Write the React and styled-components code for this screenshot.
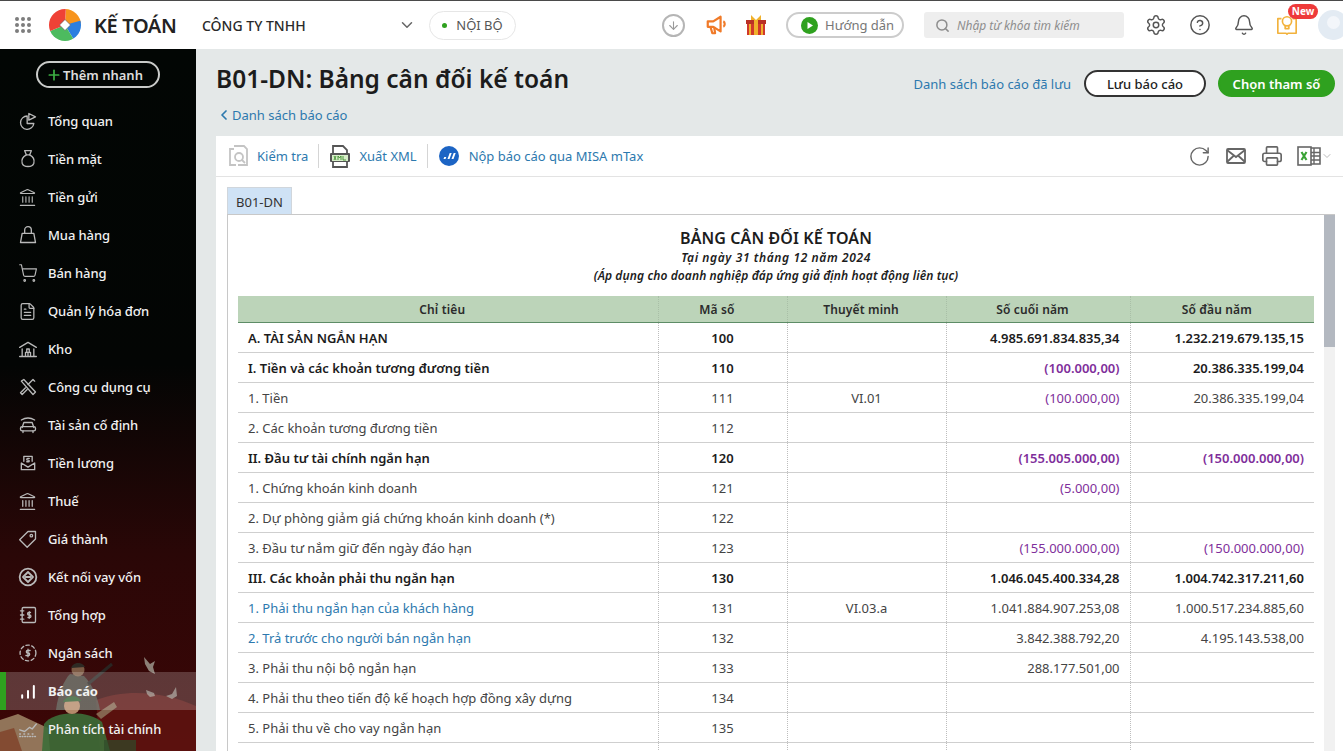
import React from "react";
import styled, { createGlobalStyle } from "styled-components";
import {
  Search,
  Settings,
  CircleHelp,
  Bell,
  ChevronDown,
  ChevronLeft,
  ArrowDown,
  RotateCw,
  Printer,
  Plus,
  Landmark,
  ShoppingCart,
  FileText,
} from "lucide-react";

const GlobalStyle = createGlobalStyle`
  html, body {
    margin: 0;
    height: 100%;
    overflow: hidden;
    background: #e4e8e8;
    font-family: "Noto Sans", "Open Sans", sans-serif;
  }
  * { box-sizing: border-box; }
`;

const Page = styled.div`
  height: 751px;
  display: flex;
  flex-direction: column;
  overflow: hidden;
`;

/* top bar */
const TopBar = styled.header`
  height: 49px;
  flex: none;
  background: #fff;
  border-top: 1px solid #4a4a4a;
  display: flex;
  align-items: center;
  padding-left: 15px;
  position: relative;
`;

const AppGrid = styled.div`
  display: grid;
  grid-template-columns: repeat(3, 4px);
  gap: 2px;
  margin-right: 18px;
  i {
    width: 4px;
    height: 4px;
    border-radius: 50%;
    background: #7d7d7d;
  }
`;

const Brand = styled.div`
  font-size: 20px;
  font-weight: 600;
  letter-spacing: -0.35px;
  color: #222;
  margin-left: 13px;
  width: 108px;
`;

const Company = styled.div`
  font-size: 14px;
  font-weight: 500;
  color: #2a2a2a;
  width: 196px;
`;

const ScopePill = styled.div`
  height: 29px;
  width: 87px;
  margin-left: 13px;
  border: 1px solid #e6e6e6;
  border-radius: 15px;
  display: flex;
  align-items: center;
  justify-content: center;
  gap: 9px;
  font-size: 13px;
  color: #555;
  i {
    width: 5px;
    height: 5px;
    border-radius: 50%;
    background: #2fa11f;
  }
`;

const TopRight = styled.div`
  margin-left: auto;
  display: flex;
  align-items: center;
`;

const RoundDown = styled.div`
  width: 23px;
  height: 23px;
  margin-right: 1px;
  border-radius: 50%;
  border: 2px solid #b5b5b5;
  color: #9a9a9a;
  display: flex;
  align-items: center;
  justify-content: center;
`;

const TopIcon = styled.div`
  display: flex;
  margin-left: ${(p) => p.$gap || 0}px;
  color: #555;
`;

const GuidePill = styled.div`
  height: 26px;
  width: 118px;
  margin-left: 20px;
  border: 2px solid #ccc;
  border-radius: 13px;
  display: flex;
  align-items: center;
  padding-left: 13px;
  gap: 7px;
  font-size: 13px;
  color: #777;
`;

const SearchBox = styled.div`
  width: 200px;
  height: 26px;
  margin-left: 20px;
  background: #eeeeee;
  border-radius: 3px;
  display: flex;
  align-items: center;
  padding-left: 11px;
  gap: 7px;
  color: #8d8d8d;
  font-size: 12px;
  font-style: italic;
`;

const NewBadge = styled.span`
  position: absolute;
  left: 1288px;
  top: 3px;
  width: 30px;
  height: 15px;
  border-radius: 8px;
  background: #ee3a3a;
  color: #fff;
  font-size: 10px;
  font-weight: 700;
  line-height: 15px;
  text-align: center;
`;

const Avatar = styled.div`
  width: 30px;
  height: 30px;
  margin-left: 20px;
  margin-right: -5px;
  border-radius: 50%;
  background: #e3ebf3;
  position: relative;
  overflow: hidden;
  &::after {
    content: "";
    position: absolute;
    left: 9px;
    top: 6px;
    width: 13px;
    height: 13px;
    border-radius: 50%;
    background: #f3f6fa;
  }
`;

/* body */
const Body = styled.div`
  flex: 1;
  min-height: 0;
  display: flex;
`;

const Sidebar = styled.aside`
  width: 196px;
  flex: none;
  position: relative;
  overflow: hidden;
  background: linear-gradient(180deg, #020604 0%, #030504 45%, #2a0707 72%, #3d0606 100%);
  padding-top: 12px;
`;

const Artwork = styled.svg`
  position: absolute;
  left: 0;
  bottom: 0;
  width: 196px;
  height: 111px;
`;

const QuickAdd = styled.button`
  position: relative;
  display: flex;
  align-items: center;
  gap: 1px;
  width: 124px;
  height: 27px;
  margin: 0 0 14px 36px;
  padding: 0 0 0 8px;
  background: transparent;
  border: 2px solid #c9cbc9;
  border-radius: 14px;
  color: #dcdcdc;
  font: 600 13px "Noto Sans", sans-serif;
  svg { color: #3cb043; }
`;

const MenuItem = styled.div`
  position: relative;
  height: 38px;
  display: flex;
  align-items: center;
  padding-left: ${(p) => (p.$active ? 12 : 18)}px;
  color: #f1f1f1;
  font-size: 13px;
  letter-spacing: -0.1px;
  font-weight: ${(p) => (p.$active ? 700 : 500)};
  background: ${(p) => (p.$active ? "rgba(255,255,255,0.2)" : "transparent")};
  border-left: ${(p) => (p.$active ? "6px solid #2fa11f" : "0")};
`;

const MenuIcon = styled.span`
  width: 30px;
  display: flex;
  color: ${(p) => (p.$active ? "#fff" : "#b9b9b9")};
`;

/* main */
const Main = styled.main`
  flex: 1;
  min-width: 0;
  padding-left: 20px;
  display: flex;
  flex-direction: column;
`;

const HeadRow = styled.div`
  height: 87px;
  flex: none;
  display: flex;
  justify-content: space-between;
  padding-right: 8px;
`;

const TitleBlock = styled.div`
  padding-top: 11px;
  h1 {
    margin: 0;
    font-size: 24.5px;
    line-height: 38px;
    font-weight: 600;
    color: #1c1c1c;
  }
`;

const BackLink = styled.div`
  display: flex;
  align-items: center;
  margin-top: 8px;
  font-size: 13px;
  color: #2d79ae;
`;

const Actions = styled.div`
  display: flex;
  align-items: center;
  gap: 12px;
  height: 27px;
  margin-top: 21px;
`;

const SavedLink = styled.span`
  font-size: 13px;
  color: #2d79ae;
  margin-right: 1px;
`;

const PillButton = styled.button`
  height: 27px;
  width: ${(p) => p.$w}px;
  padding: 0;
  border-radius: 14px;
  border: 2px solid ${(p) => (p.$primary ? "#2fa11f" : "#333")};
  background: ${(p) => (p.$primary ? "#2fa11f" : "#fff")};
  color: ${(p) => (p.$primary ? "#fff" : "#222")};
  font: ${(p) => (p.$primary ? 600 : 500)} 13px "Noto Sans", sans-serif;
`;

const Panel = styled.section`
  flex: 1;
  min-height: 0;
  background: #fff;
  display: flex;
  flex-direction: column;
`;

const Toolbar = styled.div`
  height: 41px;
  flex: none;
  border-bottom: 1px solid #e3e3e3;
  display: flex;
  align-items: center;
  padding: 0 13px 0 12px;
  font-size: 13px;
  color: #2d79ae;
`;

const ToolItem = styled.div`
  display: flex;
  align-items: center;
  gap: ${(p) => p.$gap || 8}px;
`;

const ToolSep = styled.span`
  width: 1px;
  height: 24px;
  background: #d5d5d5;
  margin: 0 ${(p) => p.$right || 10}px 0 10px;
`;

const ToolRight = styled.div`
  margin-left: auto;
  display: flex;
  align-items: center;
  gap: 14px;
  color: #666;
`;

const ExcelWrap = styled.div`
  display: flex;
  align-items: center;
  margin-right: -3px;
  color: #bbb;
`;

const TabStrip = styled.div`
  padding: 10px 0 0 11px;
  flex: none;
`;

const Tab = styled.div`
  width: 65px;
  height: 27px;
  background: #cfe2f5;
  border: 1px solid #d0d6dc;
  border-bottom: 0;
  font-size: 13px;
  line-height: 28px;
  text-align: center;
  color: #333;
`;

const Sheet = styled.div`
  flex: 1;
  min-height: 0;
  margin-left: 11px;
  margin-right: 8px;
  border-top: 1px solid #c8c8c8;
  border-left: 1px solid #c8c8c8;
  display: flex;
  overflow: hidden;
`;

const SheetBody = styled.div`
  flex: 1;
  min-width: 0;
  padding: 0 10px;
`;

const Scrollbar = styled.div`
  width: 11px;
  flex: none;
  background: #f1f1f1;
  i {
    display: block;
    height: 132px;
    background: #b3b8c0;
  }
`;

const ReportTitle = styled.div`
  text-align: center;
  padding-top: 12px;
  height: 81px;
  color: #1c1c1c;
  h2 {
    margin: 0;
    font-size: 16px;
    line-height: 22px;
    font-weight: 600;
    letter-spacing: 0.1px;
  }
`;

const ReportLine = styled.p`
  margin: 0;
  font-size: 12px;
  line-height: 18px;
  font-weight: 600;
  font-style: italic;
  letter-spacing: ${(p) => p.$track}px;
`;

const Table = styled.table`
  width: 1076px;
  border-collapse: collapse;
  table-layout: fixed;
  font-size: 13px;
  color: #333;
`;

const Th = styled.th`
  height: 26px;
  background: #bcd4b9;
  border-bottom: 1px solid #5d8c66;
  border-left: 1px dotted #a9bfa7;
  font-size: 12px;
  font-weight: 600;
  letter-spacing: 0.15px;
  color: #2b2b2b;
  padding: 2px 11px 0 0;
  &:first-child { border-left: 0; }
`;

const Td = styled.td`
  height: 30px;
  padding: 1px 10px 0;
  border-bottom: 1px solid #cfcfcf;
  border-left: 1px dotted #bdbdbd;
  white-space: nowrap;
  text-align: ${(p) => p.$align || "left"};
  font-weight: ${(p) => (p.$bold ? 600 : 400)};
  color: ${(p) => (p.$neg ? "#7f2f9b" : p.$link ? "#2d79ae" : p.$bold ? "#1c1c1c" : "#444")};
  &:first-child { border-left: 0; }
`;

const Ic = ({ children, size = 20, sw = 1.6 }) => (
  <svg width={size} height={size} viewBox="0 0 24 24" fill="none" stroke="currentColor" strokeWidth={sw} strokeLinecap="round" strokeLinejoin="round">
    {children}
  </svg>
);

const menu = [
  ["Tổng quan", <Ic><path d="M11 6a8 8 0 1 0 8 9h-8z" /><path d="M13 3v8l8-4z" /></Ic>],
  ["Tiền mặt", <Ic><path d="M8 2h8l-2 5h-4z" /><path d="M10 7c-4 2-6 6-5 10 1 3 4 4 7 4s6-1 7-4c1-4-1-8-5-10" /></Ic>],
  ["Tiền gửi", <Landmark size={19} strokeWidth={1.4} />],
  ["Mua hàng", <Ic><path d="M5 10h14l2 11H3z" /><path d="M8 10V6a4 4 0 0 1 8 0v4" /></Ic>],
  ["Bán hàng", <ShoppingCart size={20} strokeWidth={1.4} />],
  ["Quản lý hóa đơn", <FileText size={19} strokeWidth={1.6} />],
  ["Kho", <Ic><path d="M2 10 12 4l10 6" /><path d="M5 12v8M19 12v8M2 21h20" /><path d="M9 20v-4h3v4M12 20v-4h3v4M10.500 16v-4h3v4" /></Ic>],
  ["Công cụ dụng cụ", <Ic><path d="m4 5 3-2 14 15-3 3z" /><path d="M20 5l-2-2-6 6M9 13l-6 6 2 2 6-6" /></Ic>],
  ["Tài sản cố định", <Ic><path d="M4 6c5-3 11-3 16 0" /><path d="M5 15l2-6h10l2 6" /><rect x="3" y="14" width="18" height="5" rx="2" /><path d="M6 19v2M18 19v2" /></Ic>],
  ["Tiền lương", <Ic><path d="M7 10V4h10v6" /><path d="M4 12v8h16v-8l-8 5z" /><path d="M13.500 6.500h-2a1 1 0 0 0 0 2h1a1 1 0 0 1 0 2h-2" /></Ic>],
  ["Thuế", <Landmark size={19} strokeWidth={1.6} />],
  ["Giá thành", <Ic><path d="M21 3v9L11 22l-9-9L12 3z" /><circle cx="16" cy="8" r="1.500" /></Ic>],
  ["Kết nối vay vốn", <Ic sw={2.2} size={20}><circle cx="12" cy="12" r="10" /><path d="m12 6-6 6 6 6 6-6z" /><path d="M9 12h6" /></Ic>],
  ["Tổng hợp", <Ic><rect x="5" y="3" width="16" height="18" rx="1.500" /><path d="M3 7h4M3 12h4M3 17h4" /><path d="M15 9h-2a1.300 1.300 0 0 0 0 3h1a1.300 1.300 0 0 1 0 3h-2M13.500 8v8" /></Ic>],
  ["Ngân sách", <Ic><circle cx="12" cy="12" r="9.500" strokeDasharray="4 3" /><path d="M14.500 9h-3a1.500 1.500 0 0 0 0 3h1a1.500 1.500 0 0 1 0 3h-3M12 7.500v9" /></Ic>],
  ["Báo cáo", <Ic sw={2.4}><path d="M5 20v-3M12 20v-8M19 20V6" /></Ic>, true],
  ["Phân tích tài chính", <Ic><path d="M2 13l6 2 6-5 3 2 5-6" /><path d="M2 21h20M2 18h1M7 18h1M12 18h1M17 18h1" strokeDasharray="1 2" /></Ic>],
];

const rows = [
  ["A. TÀI SẢN NGẮN HẠN", "100", "", "4.985.691.834.835,34", "1.232.219.679.135,15", "b"],
  ["I. Tiền và các khoản tương đương tiền", "110", "", "(100.000,00)", "20.386.335.199,04", "b"],
  ["1. Tiền", "111", "VI.01", "(100.000,00)", "20.386.335.199,04"],
  ["2. Các khoản tương đương tiền", "112", "", "", ""],
  ["II. Đầu tư tài chính ngắn hạn", "120", "", "(155.005.000,00)", "(150.000.000,00)", "b"],
  ["1. Chứng khoán kinh doanh", "121", "", "(5.000,00)", ""],
  ["2. Dự phòng giảm giá chứng khoán kinh doanh (*)", "122", "", "", ""],
  ["3. Đầu tư nắm giữ đến ngày đáo hạn", "123", "", "(155.000.000,00)", "(150.000.000,00)"],
  ["III. Các khoản phải thu ngắn hạn", "130", "", "1.046.045.400.334,28", "1.004.742.317.211,60", "b"],
  ["1. Phải thu ngắn hạn của khách hàng", "131", "VI.03.a", "1.041.884.907.253,08", "1.000.517.234.885,60", "l"],
  ["2. Trả trước cho người bán ngắn hạn", "132", "", "3.842.388.792,20", "4.195.143.538,00", "l"],
  ["3. Phải thu nội bộ ngắn hạn", "133", "", "288.177.501,00", ""],
  ["4. Phải thu theo tiến độ kế hoạch hợp đồng xây dựng", "134", "", "", ""],
  ["5. Phải thu về cho vay ngắn hạn", "135", "", "", ""],
  ["", "", "", "", ""],
];

const Logo = () => (
  <svg width="32" height="32" viewBox="0 0 32 32">
    <defs>
      <clipPath id="logoCircle"><circle cx="16" cy="16" r="16" /></clipPath>
    </defs>
    <g clipPath="url(#logoCircle)">
      <path d="M16 16 17-2h20v16z" fill="#f7941d" />
      <path d="M16 16 37 10v26h-9z" fill="#2b7fe0" />
      <path d="M16 16 28 36H-4V24z" fill="#4dbb5f" />
      <path d="M16 16-4 24V-4h21z" fill="#ef4136" />
    </g>
    <path d="M16 10.500 21.500 16 16 21.500 10.500 16z" fill="#fff" stroke="#555" strokeWidth=".6" />
  </svg>
);

const Megaphone = () => (
  <svg width="22" height="22" viewBox="0 0 24 24" fill="none" stroke="#f07a28" strokeWidth="2.400" strokeLinejoin="round">
    <path d="M3 8h6l8-5v16l-8-5H3z" />
    <path d="M6 14l2 7h3l-1-7M20 8c2 1 2 5 0 6" />
  </svg>
);

const Gift = () => (
  <svg width="20" height="22" viewBox="0 0 20 22">
    <rect x="1" y="7" width="18" height="14" fill="#d0392b" />
    <rect x="0" y="6" width="20" height="4" fill="#b93025" />
    <rect x="8" y="6" width="4" height="15" fill="#f0b12c" />
    <rect x="3" y="10" width="2" height="11" fill="#f0b12c" />
    <rect x="15" y="10" width="2" height="11" fill="#f0b12c" />
    <path d="M10 6 5 1v5zM10 6l5-5v5z" fill="#f0b12c" />
  </svg>
);

const Play = () => (
  <svg width="17" height="17" viewBox="0 0 17 17">
    <circle cx="8.500" cy="8.500" r="8.500" fill="#2fa11f" />
    <path d="M6.500 5v7l5.500-3.500z" fill="#fff" />
  </svg>
);

const BulbBook = () => (
  <svg width="22" height="22" viewBox="0 0 24 24" fill="none" stroke="#f2b23c" strokeWidth="1.800" strokeLinejoin="round">
    <path d="M6 5H2v16h9l1 1 1-1h9V5h-4" />
    <circle cx="12" cy="8" r="5" />
    <path d="M10 13v3h4v-3" />
  </svg>
);

const CheckIcon = () => (
  <svg width="20" height="22" viewBox="0 0 20 22" fill="none" stroke="#c4c4c4" strokeWidth="1.800">
    <path d="M6 1h10l3 3v16H10" />
    <path d="M6 4H2v16h6" />
    <circle cx="11" cy="12" r="4" />
    <path d="m14 15 3 3" />
  </svg>
);

const XmlIcon = () => (
  <svg width="22" height="23" viewBox="0 0 22 23" fill="none">
    <path d="M4 8V1h10l4 4v3M4 17v5h14v-5" stroke="#555" strokeWidth="1.800" />
    <rect x="1" y="8" width="20" height="9" rx="1" fill="#555" />
    <rect x="3" y="10" width="16" height="6" fill="#d7efc8" />
    <path d="M5 11l2 4M7 11l-2 4M9 15v-4l1.500 2 1.500-2v4M14 11v4h3" stroke="#3f8f2f" strokeWidth=".9" />
  </svg>
);

const MTax = () => (
  <svg width="20" height="20" viewBox="0 0 20 20">
    <circle cx="10" cy="10" r="10" fill="#1c64c4" />
    <path d="M4.500 13h2l.8-2h-2zM8.500 13h2l2.200-6h-2zM12.500 13h2l2.200-6h-2z" fill="#fff" />
  </svg>
);

const Mail = () => (
  <svg width="22" height="20" viewBox="0 0 22 20" fill="none" stroke="#666" strokeWidth="1.800">
    <rect x="2" y="3" width="18" height="14" rx="1" />
    <path d="m2 4 9 7 9-7M2 16l7-6.500M20 16l-7-6.500" />
  </svg>
);

const Excel = () => (
  <svg width="24" height="20" viewBox="0 0 24 20" fill="none">
    <path d="M11 2h12v16H11" stroke="#666" strokeWidth="1.600" />
    <path d="M11 6.500h12M11 10h12M11 14h12M17 2v16" stroke="#666" strokeWidth="1.400" />
    <rect x="1" y="1" width="13" height="18" fill="#fff" stroke="#666" strokeWidth="1.600" />
    <path d="m4.500 6 5 8M9.500 6l-5 8" stroke="#3aa335" strokeWidth="2.200" />
  </svg>
);

const SidebarArt = () => (
  <Artwork viewBox="0 0 196 111">
    <path d="M96 60c30-12 70-8 100 6v45H100z" fill="#6b1712" opacity=".65" />
    <path d="M0 80l18-6 30 14 2 23H0z" fill="#a8906e" opacity=".8" />
    <path d="M0 92l14-4 8 23H0z" fill="#7d3a22" opacity=".7" />
    <path d="M70 34c-6 6-12 20-14 36h44c-2-12-8-26-16-34z" fill="#4e5a4e" opacity=".7" />
    <path d="M88 44l24-20" stroke="#2a2522" strokeWidth="3" />
    <circle cx="78" cy="30" r="6.500" fill="#8a6a50" opacity=".85" />
    <path d="M71 28c2-6 11-7 14-1z" fill="#2e2a24" />
    <path d="M44 84c10-14 44-14 58-2l8 29H42z" fill="#3d6e39" opacity=".9" />
    <circle cx="72" cy="66" r="8" fill="#b58a6a" />
    <path d="M63 62c3-7 15-8 18-1z" fill="#345f32" />
    <path d="M96 74l18-12 3 5-16 12z" fill="#8f7a60" opacity=".8" />
    <path d="M104 100h32v11h-32z" fill="#2f4a2a" opacity=".7" />
    <path d="M144 17l6 7 5-3-2 6 2 7-6-3-4-7z" fill="#a9a99e" opacity=".75" />
    <path d="M146 50l8 3 1 3-5 1-3-3zM166 56l6-2 4-7 1 9-5 3z" fill="#a9a99e" opacity=".65" />
  </Artwork>
);

const App = () => (
  <>
    <GlobalStyle />
    <Page>
      <TopBar>
        <AppGrid>
          {Array.from({ length: 9 }).map((_, i) => <i key={i} />)}
        </AppGrid>
        <Logo />
        <Brand>KẾ TOÁN</Brand>
        <Company>CÔNG TY TNHH</Company>
        <ChevronDown size={18} color="#666" />
        <ScopePill><i />NỘI BỘ</ScopePill>
        <TopRight>
          <RoundDown><ArrowDown size={13} strokeWidth={2} /></RoundDown>
          <TopIcon $gap={19}><Megaphone /></TopIcon>
          <TopIcon $gap={19}><Gift /></TopIcon>
          <GuidePill><Play />Hướng dẫn</GuidePill>
          <SearchBox><Search size={15} strokeWidth={2.4} />Nhập từ khóa tìm kiếm</SearchBox>
          <TopIcon $gap={21}><Settings size={22} strokeWidth={1.6} /></TopIcon>
          <TopIcon $gap={22}><CircleHelp size={22} strokeWidth={1.6} /></TopIcon>
          <TopIcon $gap={22}><Bell size={22} strokeWidth={1.6} /></TopIcon>
          <TopIcon $gap={21}><BulbBook /></TopIcon>
          <Avatar />
        </TopRight>
        <NewBadge>New</NewBadge>
      </TopBar>
      <Body>
        <Sidebar>
          <SidebarArt />
          <QuickAdd><Plus size={16} strokeWidth={2.6} />Thêm nhanh</QuickAdd>
          {menu.map(([label, icon, active]) => (
            <MenuItem key={label} $active={active}>
              <MenuIcon $active={active}>{icon}</MenuIcon>
              <span>{label}</span>
            </MenuItem>
          ))}
        </Sidebar>
        <Main>
          <HeadRow>
            <TitleBlock>
              <h1>B01-DN: Bảng cân đối kế toán</h1>
              <BackLink><ChevronLeft size={16} strokeWidth={2.6} />Danh sách báo cáo</BackLink>
            </TitleBlock>
            <Actions>
              <SavedLink>Danh sách báo cáo đã lưu</SavedLink>
              <PillButton $w={122}>Lưu báo cáo</PillButton>
              <PillButton $w={117} $primary>Chọn tham số</PillButton>
            </Actions>
          </HeadRow>
          <Panel>
            <Toolbar>
              <ToolItem $gap={9}><CheckIcon />Kiểm tra</ToolItem>
              <ToolSep />
              <ToolItem $gap={8}><XmlIcon />Xuất XML</ToolItem>
              <ToolSep $right={11} />
              <ToolItem $gap={10}><MTax />Nộp báo cáo qua MISA mTax</ToolItem>
              <ToolRight>
                <RotateCw size={23} strokeWidth={1.5} />
                <Mail />
                <Printer size={22} strokeWidth={1.8} />
                <ExcelWrap><Excel /><ChevronDown size={12} /></ExcelWrap>
              </ToolRight>
            </Toolbar>
            <TabStrip><Tab>B01-DN</Tab></TabStrip>
            <Sheet>
              <SheetBody>
                <ReportTitle>
                  <h2>BẢNG CÂN ĐỐI KẾ TOÁN</h2>
                  <ReportLine $track={0.6}>Tại ngày 31 tháng 12 năm 2024</ReportLine>
                  <ReportLine $track={0.1}>(Áp dụng cho doanh nghiệp đáp ứng giả định hoạt động liên tục)</ReportLine>
                </ReportTitle>
                <Table>
                  <colgroup>
                    <col width="420" />
                    <col width="129" />
                    <col width="159" />
                    <col width="184" />
                    <col width="184" />
                  </colgroup>
                  <thead>
                    <tr>
                      <Th>Chỉ tiêu</Th>
                      <Th>Mã số</Th>
                      <Th>Thuyết minh</Th>
                      <Th>Số cuối năm</Th>
                      <Th>Số đầu năm</Th>
                    </tr>
                  </thead>
                  <tbody>
                    {rows.map(([name, code, note, end, start, kind], i) => {
                      const bold = kind === "b";
                      return (
                        <tr key={i}>
                          <Td $bold={bold} $link={kind === "l"}>{name}</Td>
                          <Td $bold={bold} $align="center">{code}</Td>
                          <Td $align="center">{note}</Td>
                          <Td $bold={bold} $align="right" $neg={end.startsWith("(")}>{end}</Td>
                          <Td $bold={bold} $align="right" $neg={start.startsWith("(")}>{start}</Td>
                        </tr>
                      );
                    })}
                  </tbody>
                </Table>
              </SheetBody>
              <Scrollbar><i /></Scrollbar>
            </Sheet>
          </Panel>
        </Main>
      </Body>
    </Page>
  </>
);

export default App;
